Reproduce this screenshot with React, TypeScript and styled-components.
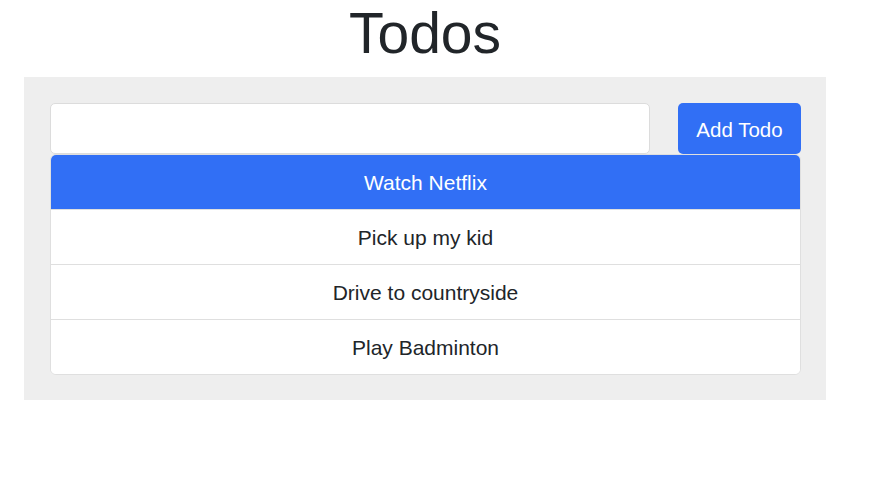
import React from "react";
import styled, { createGlobalStyle } from "styled-components";

const Global = createGlobalStyle`
  html, body { margin: 0; padding: 0; background: #fff; }
  body { font-family: "Liberation Sans", Arial, sans-serif; color: #212529; }
`;

const Page = styled.div`
  width: 802px;
  margin-left: 24px;
  display: flex;
  flex-direction: column;
`;

const Title = styled.h1`
  margin: 0;
  height: 77px;
  font-size: 57px;
  font-weight: 400;
  line-height: 66px;
  text-align: center;
  color: #212529;
`;

const Panel = styled.div`
  background: #eeeeee;
  padding: 26px 25px 25px 26px;
  display: flex;
  flex-direction: column;
`;

const Form = styled.form`
  display: flex;
  gap: 28px;
  margin: 0;
`;

const Input = styled.input`
  width: 600px;
  height: 51px;
  box-sizing: border-box;
  border: 1px solid #dcdcdc;
  border-radius: 5px;
  background: #fff;
  font-size: 20px;
  font-family: inherit;
  padding: 0 12px;
  outline: none;
`;

const Button = styled.button`
  width: 123px;
  height: 51px;
  border: none;
  border-radius: 5px;
  background: #316ff5;
  color: #fff;
  font-size: 20.5px;
  font-family: inherit;
  padding: 3px 0 0;
  cursor: pointer;
`;

const List = styled.ul`
  list-style: none;
  margin: 0;
  padding: 0;
  border: 1px solid #dfdfdf;
  border-radius: 6px;
  overflow: hidden;
  background: #fff;
`;

const Item = styled.li<{ $active?: boolean }>`
  height: 54px;
  box-sizing: border-box;
  padding-top: 2px;
  display: flex;
  align-items: center;
  justify-content: center;
  font-size: 21px;
  background: ${(p) => (p.$active ? "#316ff5" : "#fff")};
  color: ${(p) => (p.$active ? "#fff" : "#212529")};
  & + & {
    border-top: 1px solid #dfdfdf;
    height: 55px;
  }
`;

const todos = ["Watch Netflix", "Pick up my kid", "Drive to countryside", "Play Badminton"];

export default function App() {
  return (
    <>
      <Global />
      <Page>
        <Title>Todos</Title>
        <Panel>
          <Form onSubmit={(e) => e.preventDefault()}>
            <Input type="text" />
            <Button type="submit">Add Todo</Button>
          </Form>
          <List>
            {todos.map((t, i) => (
              <Item key={t} $active={i === 0}>
                {t}
              </Item>
            ))}
          </List>
        </Panel>
      </Page>
    </>
  );
}
